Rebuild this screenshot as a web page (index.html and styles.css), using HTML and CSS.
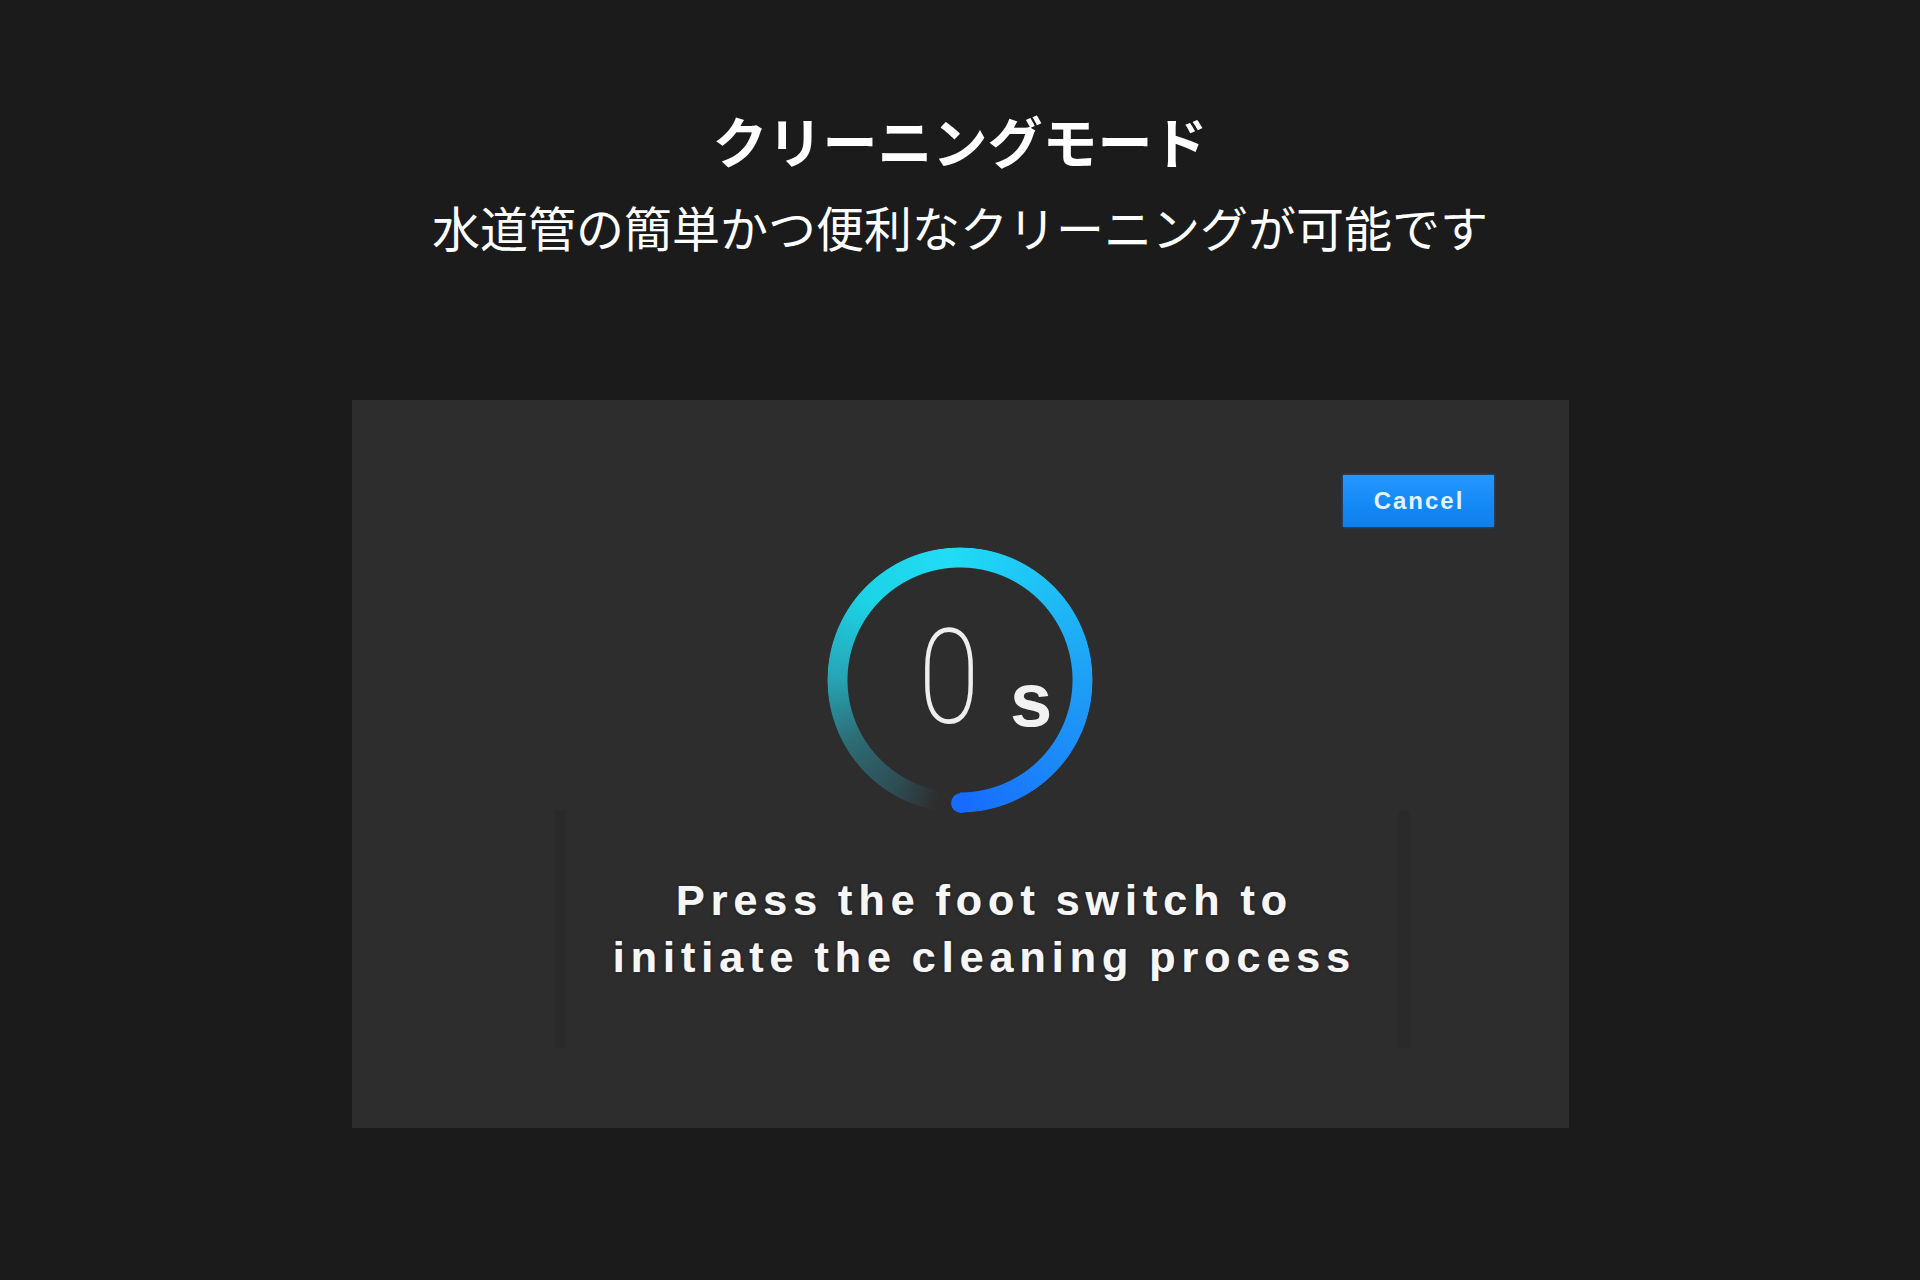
FILE: index.html
```html
<!DOCTYPE html>
<html lang="ja">
<head>
<meta charset="utf-8">
<title>クリーニングモード</title>
<link rel="stylesheet" href="styles.css">
</head>
<body>
  <header class="intro">
    <h1 class="title">クリーニングモード</h1>
    <p class="subtitle">水道管の簡単かつ便利なクリーニングが可能です</p>
  </header>
  <section class="panel">
    <div class="panel-top">
      <button class="cancel">Cancel</button>
    </div>
    <div class="dial">
      <div class="ring"></div>
      <div class="ring-cap"></div>
      <div class="readout">
        <span class="digit">0</span>
        <span class="unit">s</span>
      </div>
    </div>
    <div class="caption">
      <p class="caption-text">Press the foot switch to<br>initiate the cleaning process</p>
    </div>
  </section>
</body>
</html>
```
FILE: styles.css
```css
* { box-sizing: border-box; }
html, body { margin: 0; padding: 0; }
body {
  background: #1b1b1b;
  width: 1920px;
  min-height: 1280px;
  font-family: "Noto Sans CJK JP", "Noto Sans", sans-serif;
  color: #ffffff;
  padding-top: 105px;
}
.intro { text-align: center; }
.title {
  margin: 0;
  font-size: 55px;
  line-height: 68px;
  font-weight: 700;
}
.subtitle {
  margin: 23px 0 0;
  font-size: 48px;
  line-height: 60px;
  font-weight: 400;
}
.panel {
  width: 1217px;
  margin: 144px auto 0;
  background: #2d2d2d;
  padding: 75px 75px 80px;
}
.panel-top {
  display: flex;
  justify-content: flex-end;
}
.cancel {
  width: 151px;
  height: 52px;
  border: 0;
  padding: 0 0 0 2px;
  background: linear-gradient(180deg, #2797ff 0%, #138af6 55%, #0e7fec 100%);
  box-shadow: 0 0 3px rgba(20,130,255,0.6);
  color: #e4f2ff;
  font-family: "Liberation Sans", Arial, sans-serif;
  font-weight: 700;
  font-size: 24px;
  letter-spacing: 2px;
}
.dial {
  position: relative;
  width: 266px;
  height: 266px;
  margin: 20px auto 0;
}
.ring {
  position: absolute;
  inset: 0;
  border-radius: 50%;
  background: conic-gradient(from 180deg,
    rgba(45,45,45,0) 0deg,
    rgba(45,45,45,0) 10deg,
    #2f4b52 30deg,
    #2d6b74 60deg,
    #26a6b6 92deg,
    #1cd3e6 130deg,
    #20dcf4 175deg,
    #1fc4f6 215deg,
    #1ea2f6 265deg,
    #1b86fa 315deg,
    #176bff 360deg);
  -webkit-mask: radial-gradient(circle closest-side, transparent 112px, #000 113px, #000 132px, transparent 133px);
  mask: radial-gradient(circle closest-side, transparent 112px, #000 113px, #000 132px, transparent 133px);
  filter: blur(0.6px);
}
.ring-cap {
  position: absolute;
  left: 124px;
  top: 246px;
  width: 20px;
  height: 20px;
  border-radius: 50%;
  background: #176bff;
  filter: blur(0.6px);
}
.readout {
  position: absolute;
  left: 87px;
  top: 66px;
  display: flex;
  align-items: baseline;
  font-family: "Liberation Sans", Arial, sans-serif;
}
.digit {
  display: inline-block;
  width: 55px;
  text-align: center;
  font-family: "Roboto", "DejaVu Sans", sans-serif;
  font-weight: 200;
  font-size: 132px;
  line-height: 130px;
  color: #eeeeee;
  transform: scaleX(0.84);
}
.unit {
  margin-left: 41px;
  font-weight: 700;
  font-size: 76px;
  line-height: 76px;
  color: #f2f2f2;
  position: relative;
  top: 3px;
}
.caption {
  width: 855px;
  height: 238px;
  margin: -3px 0 0 128px;
  border-left: 11px solid #2a2a2a;
  border-right: 12px solid #2a2a2a;
  padding-top: 62px;
}
.caption-text {
  margin: 0;
  text-align: center;
  font-family: "Liberation Sans", Arial, sans-serif;
  font-weight: 700;
  font-size: 43px;
  line-height: 57px;
  letter-spacing: 6px;
  word-spacing: -3px;
  padding-left: 6px;
  color: #f6f6f6;
  text-shadow: 0 0 1px rgba(255,255,255,0.6), 0 0 3px rgba(0,0,0,0.8);
}
```
